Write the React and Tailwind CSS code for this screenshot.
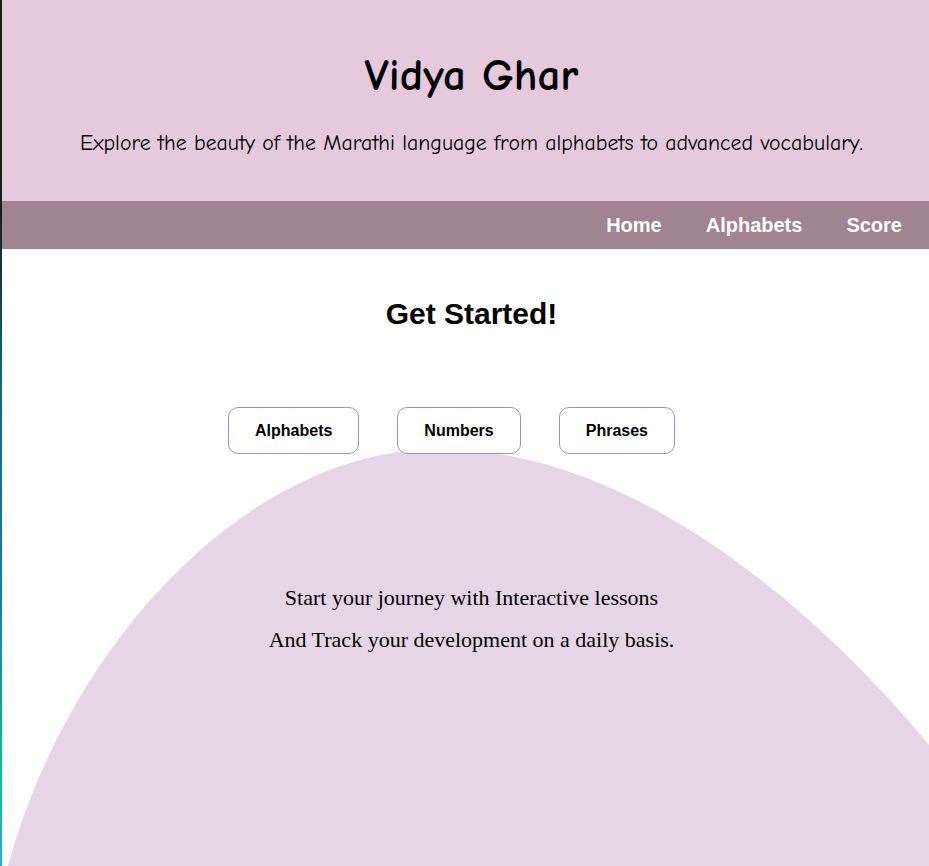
import React from "react";

const comic = { fontFamily: '"Comic Sans MS", "Comic Neue", "DejaVu Sans", sans-serif' };

function Blob() {
  return (
    <svg
      className="absolute left-0 top-0"
      width="927"
      height="617"
      viewBox="2 249 927 617"
      aria-hidden="true"
    >
      <path
        d="M 8 866 C 70 640, 250 449, 440 449 C 620 449, 800 590, 929 745 L 929 866 Z"
        fill="#e6d5e6"
      />
    </svg>
  );
}

export default function App() {
  const lessons = ["Alphabets", "Numbers", "Phrases"];
  const links = ["Home", "Alphabets", "Score"];

  return (
    <div className="flex h-[866px] w-[929px] overflow-hidden bg-white">
      <div className="w-[2px] shrink-0 bg-[linear-gradient(180deg,#1d1d1d_0%,#1d1d1d_25%,#146a7c_45%,#17809a_70%,#10c48f_90%,#3aa3d6_100%)]" />

      <div className="flex-1 flex flex-col">
        <header className="h-[201px] bg-[#e4cadb] flex flex-col items-center pl-[12px] text-black" style={comic}>
          <h1 className="mt-[45px] text-[45px] leading-[60px] font-bold">Vidya Ghar</h1>
          <p className="mt-[23px] text-[21.8px] leading-[30px]">
            Explore the beauty of the Marathi language from alphabets to advanced vocabulary.
          </p>
        </header>

        <nav className="h-[48px] bg-[#a08490] flex items-center justify-end gap-[44px] pr-[27px] font-['Liberation_Sans',Arial,sans-serif]">
          {links.map((l) => (
            <a key={l} href="#" className="text-white font-bold text-[20px] leading-none">
              {l}
            </a>
          ))}
        </nav>

        <main className="relative flex-1 overflow-hidden">
          <Blob />
          <div className="relative flex flex-col items-center pl-[12px]">
            <h2 className="mt-[46px] text-[30px] leading-[38px] font-bold text-black font-['Liberation_Sans',Arial,sans-serif]">
              Get Started!
            </h2>
            <div className="mt-[74px] mr-[40px] flex gap-[38px] font-['Liberation_Sans',Arial,sans-serif]">
              {lessons.map((b) => (
                <button
                  key={b}
                  type="button"
                  className="h-[47px] px-[26px] rounded-[10px] border border-[#9a94c2] bg-white text-[16px] font-bold text-black"
                >
                  {b}
                </button>
              ))}
            </div>
            <div className="mt-[130px] flex flex-col items-center gap-[14px] text-[22px] leading-[28px] text-black font-['Liberation_Serif',Georgia,serif]">
              <p>Start your journey with Interactive lessons</p>
              <p>And Track your development on a daily basis.</p>
            </div>
          </div>
        </main>
      </div>
    </div>
  );
}
